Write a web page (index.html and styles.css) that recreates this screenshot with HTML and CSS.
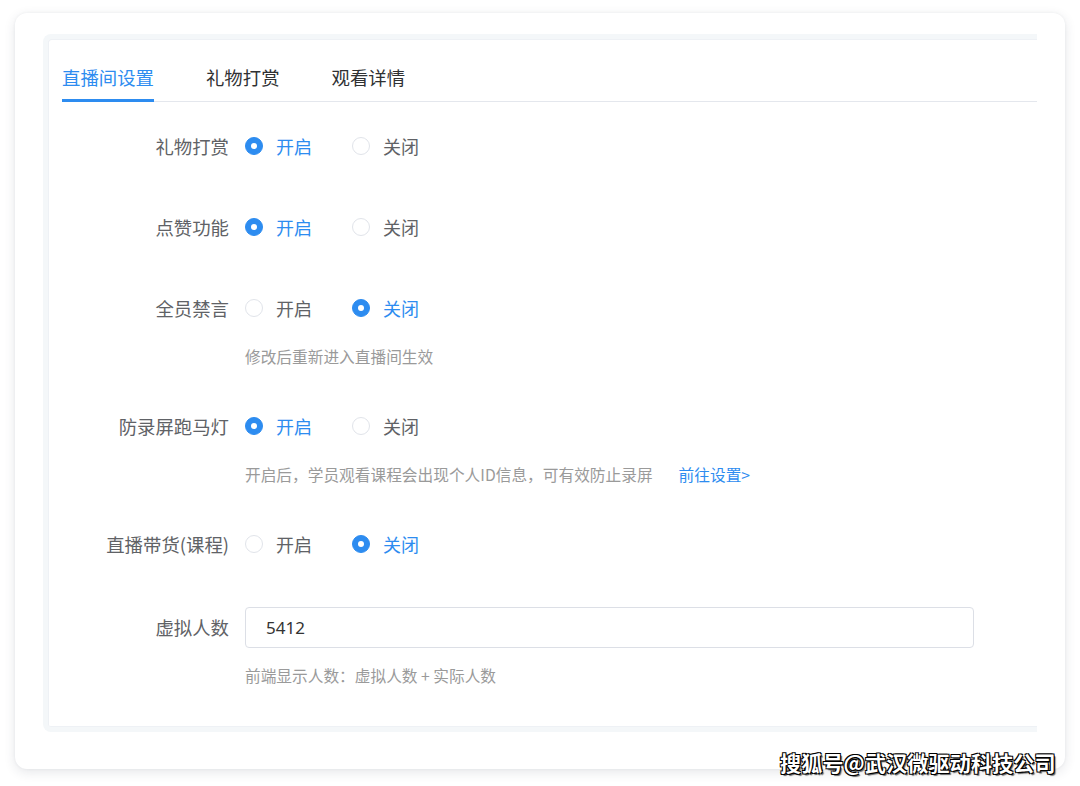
FILE: index.html
```html
<!DOCTYPE html>
<html lang="zh-CN">
<head>
<meta charset="utf-8">
<title>直播间设置</title>
<link rel="stylesheet" href="styles.css">
</head>
<body>
<div class="card">
  <div class="panel">
    <div class="tabs">
      <div class="tab active">直播间设置</div>
      <div class="tab">礼物打赏</div>
      <div class="tab">观看详情</div>
    </div>
    <div class="form">
      <div class="item">
        <div class="row">
          <div class="label">礼物打赏</div>
          <div class="radios">
            <span class="radio checked"><i></i>开启</span>
            <span class="radio"><i></i>关闭</span>
          </div>
        </div>
      </div>
      <div class="item">
        <div class="row">
          <div class="label">点赞功能</div>
          <div class="radios">
            <span class="radio checked"><i></i>开启</span>
            <span class="radio"><i></i>关闭</span>
          </div>
        </div>
      </div>
      <div class="item">
        <div class="row">
          <div class="label">全员禁言</div>
          <div class="radios">
            <span class="radio"><i></i>开启</span>
            <span class="radio checked"><i></i>关闭</span>
          </div>
        </div>
        <div class="help">修改后重新进入直播间生效</div>
      </div>
      <div class="item">
        <div class="row">
          <div class="label">防录屏跑马灯</div>
          <div class="radios">
            <span class="radio checked"><i></i>开启</span>
            <span class="radio"><i></i>关闭</span>
          </div>
        </div>
        <div class="help">开启后，学员观看课程会出现个人ID信息，可有效防止录屏<a class="link">前往设置&gt;</a></div>
      </div>
      <div class="item">
        <div class="row">
          <div class="label">直播带货(课程)</div>
          <div class="radios">
            <span class="radio"><i></i>开启</span>
            <span class="radio checked"><i></i>关闭</span>
          </div>
        </div>
      </div>
      <div class="item last">
        <div class="row">
          <div class="label">虚拟人数</div>
          <div class="input">5412</div>
        </div>
        <div class="help">前端显示人数：虚拟人数 + 实际人数</div>
      </div>
    </div>
  </div>
</div>
<div class="watermark">搜狐号@武汉微驱动科技公司</div>
</body>
</html>
```

FILE: styles.css
```css
* { box-sizing: border-box; }
html, body {
  margin: 0;
  padding: 0;
  background: #ffffff;
  font-family: "Noto Sans CJK SC", "Noto Sans", sans-serif;
}
body {
  width: 1080px;
  height: 786px;
  position: relative;
  overflow: hidden;
  padding-top: 13px;
  padding-left: 15px;
}
.card {
  width: 1050px;
  height: 756px;
  background: #fff;
  border-radius: 12px;
  box-shadow: 0 3px 12px rgba(40, 50, 70, 0.12), 0 0 3px rgba(40, 50, 70, 0.06);
  padding: 21px 28px 37px 28px;
}
.panel {
  height: 698px;
  width: 994px;
  border: 5px solid #f4f7f9;
  border-right: none;
  border-radius: 8px 0 0 8px;
  box-shadow: inset 1px 1px 0 #eef1f5, inset 0 -1px 0 #eef1f5;
  padding-left: 14px;
}
.tabs {
  display: flex;
  border-bottom: 1px solid #e4e7ed;
  height: 63px;
}
.tab {
  font-size: 18.4px;
  line-height: 26px;
  padding-top: 25px;
  color: #303133;
  margin-right: 52px;
  height: 63px;
}
.tab.active {
  color: #2d8cf0;
  border-bottom: 3px solid #2d8cf0;
}
.form {
  padding-top: 24px;
  margin-left: -14px;
}
.item {
  margin-bottom: 41px;
}
.item.last {
  padding-top: 2px;
}
.row {
  display: flex;
  align-items: center;
  height: 40px;
}
.label {
  width: 197px;
  padding-right: 16px;
  text-align: right;
  font-size: 18.4px;
  color: #606266;
  white-space: nowrap;
}
.radios {
  display: flex;
  align-items: center;
}
.radio {
  display: flex;
  align-items: center;
  font-size: 18px;
  color: #606266;
  margin-right: 40px;
}
.radio i {
  display: block;
  width: 18px;
  height: 18px;
  border-radius: 50%;
  border: 1px solid #e1e4ea;
  background: #fff;
  margin-right: 13px;
  position: relative;
}
.radio.checked { color: #2d8cf0; }
.radio.checked i {
  background: #2d8cf0;
  border-color: #2d8cf0;
}
.radio.checked i::after {
  content: "";
  position: absolute;
  left: 50%;
  top: 50%;
  width: 6px;
  height: 6px;
  margin: -3px 0 0 -3px;
  border-radius: 50%;
  background: #fff;
}
.help {
  margin-top: 18px;
  margin-bottom: -3px;
  margin-left: 197px;
  font-size: 15.7px;
  line-height: 22px;
  color: #9a9a9a;
  white-space: nowrap;
}
.link {
  color: #2d8cf0;
  margin-left: 26px;
}
.input {
  width: 729px;
  height: 41px;
  border: 1px solid #dcdfe6;
  border-radius: 4px;
  padding-left: 20px;
  font-size: 17px;
  line-height: 39px;
  color: #333;
  font-family: "Noto Sans", "Noto Sans CJK SC", sans-serif;
}
.watermark {
  position: absolute;
  left: 780px;
  top: 748px;
  font-size: 21px;
  font-weight: bold;
  line-height: 28px;
  color: #fff;
  letter-spacing: 0.2px;
  text-shadow: 1px 1px 0 #000, -1px -1px 0 #000, 1px -1px 0 #000, -1px 1px 0 #000, 2px 2px 1px rgba(0,0,0,0.6);
}
```
